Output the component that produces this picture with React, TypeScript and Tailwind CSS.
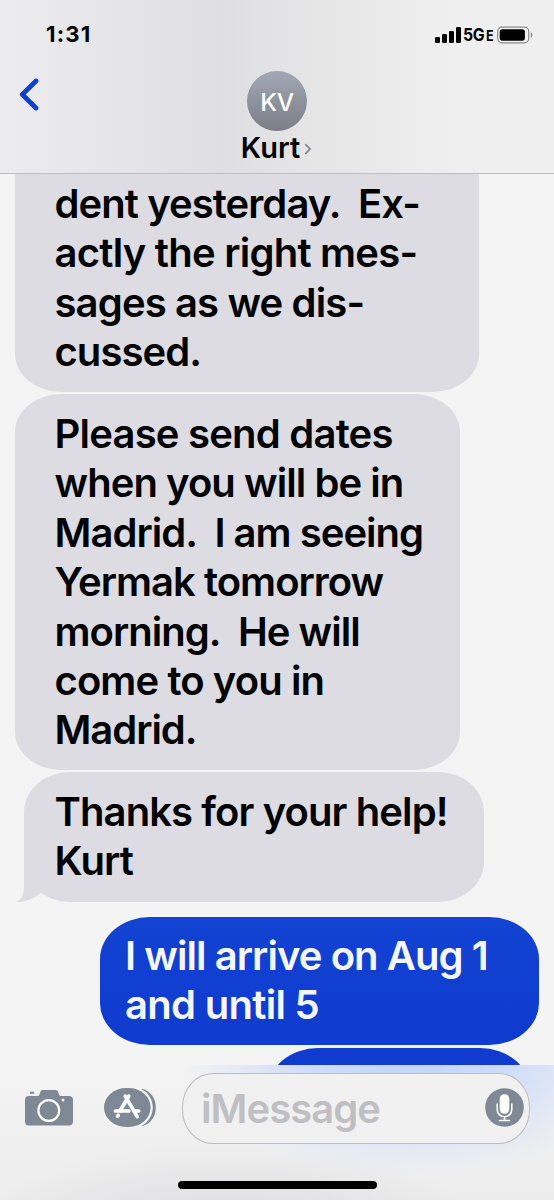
import clsx from "clsx"

type Line = { text: string; tracking: string }

const yesterday: Line[] = [
	{ text: "dent yesterday.  Ex-", tracking: "tracking-[-0.93px]" },
	{ text: "actly the right mes-", tracking: "tracking-[-0.76px]" },
	{ text: "sages as we dis-", tracking: "tracking-[-0.86px]" },
	{ text: "cussed.", tracking: "tracking-[-0.95px]" },
]

const madrid: Line[] = [
	{ text: "Please send dates", tracking: "tracking-[-0.78px]" },
	{ text: "when you will be in", tracking: "tracking-[-0.94px]" },
	{ text: "Madrid.  I am seeing", tracking: "tracking-[-0.97px]" },
	{ text: "Yermak tomorrow", tracking: "tracking-[-0.98px]" },
	{ text: "morning.  He will", tracking: "tracking-[-0.97px]" },
	{ text: "come to you in", tracking: "tracking-[-0.9px]" },
	{ text: "Madrid.", tracking: "tracking-[-1.05px]" },
]

const thanks: Line[] = [
	{ text: "Thanks for your help!", tracking: "tracking-[-0.9px]" },
	{ text: "Kurt", tracking: "tracking-[-0.9px]" },
]

const arrive: Line[] = [
	{ text: "I will arrive on Aug 1", tracking: "tracking-[-0.93px]" },
	{ text: "and until 5", tracking: "tracking-[-0.7px]" },
]

function Bubble({ lines, className }: { lines: Line[]; className: string }) {
	return (
		<div
			className={clsx(
				"relative shrink-0 text-[40px] leading-[49.4px] font-semibold whitespace-pre",
				className
			)}
		>
			{lines.map((line) => (
				<p key={line.text}>
					<span className={line.tracking}>{line.text}</span>
				</p>
			))}
		</div>
	)
}

function StatusBar() {
	return (
		<div className="flex h-[70px] items-center justify-between pr-[20px] pl-[46px]">
			<span className="pb-[2px] text-[22px] font-bold tracking-[1.2px]">1:31</span>
			<div className="flex items-center">
				<svg width="26" height="16" viewBox="0 0 26 16">
					<rect x="0" y="10" width="5" height="6" rx="1.2" />
					<rect x="7" y="7" width="5" height="9" rx="1.2" />
					<rect x="14" y="4" width="5" height="12" rx="1.2" />
					<rect x="21" y="0" width="5" height="16" rx="1.2" />
				</svg>
				<div className="ml-[2px] flex w-[34px] items-baseline leading-none whitespace-nowrap">
					<span className="w-[23px] origin-left scale-x-88 text-[18px] font-bold tracking-[-0.3px]">5G</span>
					<span className="origin-left scale-x-90 text-[14px] font-bold">E</span>
				</div>
				<svg width="37" height="18" viewBox="0 0 37 18">
					<rect x="0.7" y="1.2" width="31" height="15.6" rx="4.2" fill="#f3f3f3" stroke="#8b8b8d" strokeWidth="1.2" />
					<rect x="2.7" y="3.3" width="25.2" height="11.4" rx="2.6" />
					<path d="M33.800 6q3.400 3 0 6z" fill="#8b8b8d" />
				</svg>
			</div>
		</div>
	)
}

function Header() {
	return (
		<header className="h-[174px] shrink-0 border-b border-[#bdbdc2] bg-linear-to-r from-[#ececee] via-[#dfdfe1] via-40% to-[#efefef] to-82%">
			<StatusBar />
			<div className="grid grid-cols-[1fr_auto_1fr]">
				<svg width="21" height="33" viewBox="0 0 21 33" className="mt-[8px] ml-[19px]">
					<path
						d="M17 3 3.300 16.500l13.700 13.500"
						fill="none"
						stroke="#113fd0"
						strokeWidth="4.800"
						strokeLinecap="round"
						strokeLinejoin="round"
					/>
				</svg>
				<div className="flex flex-col items-center pt-px">
					<div className="flex size-[60px] items-center justify-center rounded-full bg-linear-to-b from-[#a2a8b5] to-[#7c7e87] pt-[3px] text-[24.500px] font-medium tracking-[-0.4px] text-white">
						KV
					</div>
					<div className="flex h-[34px] items-center pr-px">
						<span className="text-[29px] leading-[34px] font-[560] tracking-[0px]">Kurt</span>
						<svg width="8" height="12" viewBox="0 0 8 12" className="mt-px ml-[4px]">
							<path d="M1.300 1.200 6 6l-4.700 4.800" fill="none" stroke="#86868a" strokeWidth="1.700" />
						</svg>
					</div>
				</div>
			</div>
		</header>
	)
}

function Camera() {
	return (
		<svg width="48" height="36" viewBox="0 0 48 36">
			<path
				d="M5 1.800h4.200v2H5zM4 6h8.600c1 0 1.500-.8 1.900-1.800l.8-2C15.800.8 16.600 0 18 0h12.500c1.500 0 2.200.8 2.700 2.200l.7 2c.4 1.200 1 1.800 2 1.800H44a4 4 0 0 1 4 4v21.500a4 4 0 0 1-4 4H4a4 4 0 0 1-4-4V10a4 4 0 0 1 4-4z"
				fill="#7f8995"
			/>
			<circle cx="23.800" cy="20.500" r="10.400" fill="none" stroke="#fff" strokeWidth="2.200" />
			<circle cx="38" cy="10" r="1.500" fill="#fff" />
		</svg>
	)
}

function AppStore() {
	return (
		<svg width="52" height="39" viewBox="0 0 52 39">
			<path d="M38 .8C47 3 51.800 11 51.800 19.500S47 36 38 38.200z" fill="#7f8995" />
			<rect x="-1.800" y="-1.800" width="50.600" height="42.600" rx="23" ry="21" fill="#f5f5f5" />
			<rect x="0" y="0" width="46.600" height="39" rx="22" ry="19.500" fill="#7f8995" />
			<g stroke="#fff" strokeWidth="3.700" strokeLinecap="round" fill="none">
				<path d="M21.300 8.200 33.200 28.600" />
				<path d="M24.700 8.200 16.200 22.500" />
				<path d="M11.500 23h13.300M30.500 23h4.200" />
				<path d="M13.600 28.100 14.200 27.200" />
			</g>
		</svg>
	)
}

function Microphone() {
	return (
		<svg width="39" height="39" viewBox="0 0 39 39">
			<circle cx="19.500" cy="19.500" r="19.300" fill="#7f8995" />
			<rect x="14.700" y="6.200" width="9.600" height="19.600" rx="4.800" fill="#fff" />
			<path
				d="M12.200 16v5.500a7.300 7.300 0 0 0 14.600 0V16M19.500 28.800v3.700M14.500 32.500h10"
				fill="none"
				stroke="#fff"
				strokeWidth="1.600"
				strokeLinecap="round"
			/>
		</svg>
	)
}

function Composer() {
	return (
		<footer className="relative h-[135px] shrink-0 overflow-hidden bg-linear-to-b from-[#f4f4f4] to-[#ececed]">
			{/* tint of the bubbles behind the bar */}
			<div className="absolute inset-0 bg-[radial-gradient(ellipse_230px_110px_at_410px_0px,#c3d6fa_0%,#ccdcf9_40%,#dfe6f5_65%,transparent_100%)]" />
			<div className="absolute inset-0 bg-[radial-gradient(ellipse_240px_70px_at_230px_150px,#dfdfe1_0%,transparent_100%)]" />
			<div className="relative flex items-start pl-[25px]">
				<div className="mt-[25px]">
					<Camera />
				</div>
				<div className="mt-[23px] ml-[31px]">
					<AppStore />
				</div>
				<div className="mt-[8px] ml-[26px] flex h-[71px] w-[348px] items-center justify-between rounded-[31px/34px] border-[1.5px] border-[#bcbcc1] bg-[#f1f1f1] pr-[5.500px] pl-[18px]">
					<span className="pt-px text-[40px] leading-[50px] font-semibold tracking-[-0.95px] text-[#bfbfc4]">
						iMessage
					</span>
					<div className="-mt-[3px]">
						<Microphone />
					</div>
				</div>
			</div>
			<div className="relative mx-auto mt-[37px] h-[7.500px] w-[199px] rounded-full bg-black" />
		</footer>
	)
}

export default function App() {
	return (
		<div className="flex h-[1200px] w-[554px] flex-col bg-[#f4f4f4] font-['Inter',sans-serif] text-black">
			<Header />
			<main className="flex h-[891px] shrink-0 flex-col overflow-hidden">
				<Bubble
					lines={yesterday}
					className="ml-[15px] h-[217.500px] w-[464px] rounded-b-[46px_38px] bg-[#dddce3] pt-[5px] pl-[39.500px]"
				/>
				<Bubble
					lines={madrid}
					className="mt-[2.500px] ml-[15px] h-[376px] w-[444.500px] rounded-[46px/38px] bg-[#dddce3] pt-[15px] pl-[39.500px]"
				/>
				<div className="relative mt-[2px] shrink-0">
					<Bubble
						lines={thanks}
						className="ml-[24px] h-[130px] w-[460px] rounded-[46px/40px] bg-[#dddce3] pt-[15px] pl-[30.500px]"
					/>
					<svg width="40" height="42" viewBox="0 0 40 42" className="absolute bottom-0 left-[16px]">
						<path d="M8 0v27c0 7-2 12-8 14.800 9 .7 17-2.800 24-8.300L36 20 20 0z" fill="#dddce3" />
					</svg>
				</div>
				<Bubble
					lines={arrive}
					className="mt-[14.500px] ml-[100px] h-[128.500px] w-[439px] rounded-[50px/42px] bg-linear-to-b from-[#1343d3] to-[#0f3bce] pt-[14.500px] pl-[25px] text-[#f5f7ff]"
				/>
				<div className="mt-[3px] ml-[268px] h-[130px] w-[262px] shrink-0 rounded-[50px/42px] bg-[#0f3bce]" />
			</main>
			<Composer />
		</div>
	)
}
